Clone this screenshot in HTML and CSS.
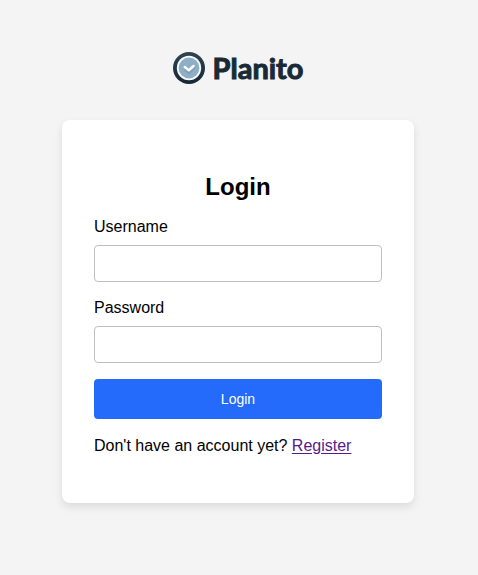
FILE: index.html
```html
<!DOCTYPE html>
<html lang="en">
<head>
  <meta charset="utf-8">
  <meta name="viewport" content="width=device-width, initial-scale=1">
  <title>Planito</title>
  <link rel="stylesheet" href="styles.css">
</head>
<body>
  <main class="page">
    <div class="brand">
      <svg class="brand-mark" viewBox="0 0 32 32" aria-hidden="true">
        <defs>
          <linearGradient id="ring" x1="0" y1="0" x2="0" y2="1">
            <stop offset="0" stop-color="#2f4553"/>
            <stop offset="1" stop-color="#152733"/>
          </linearGradient>
        </defs>
        <circle cx="16" cy="16" r="16" fill="url(#ring)"/>
        <circle cx="16" cy="16" r="12.2" fill="#f8fafb"/>
        <circle cx="16" cy="16" r="10.4" fill="#8fafc7"/>
        <path d="M12 17.5l4 3.5 5.5-5.5" fill="none" stroke="#7f9fb8" stroke-width="2.5" stroke-linecap="round" stroke-linejoin="round"/>
        <path d="M11.8 15l4 3.4 4.8-4.4" fill="none" stroke="#fff" stroke-width="2.5" stroke-linecap="round" stroke-linejoin="round"/>
      </svg>
      <span class="brand-name">Planito</span>
    </div>

    <section class="card">
      <h2 class="title">Login</h2>
      <form class="form">
        <div class="field">
          <label for="username">Username</label>
          <input id="username" name="username" type="text">
        </div>
        <div class="field">
          <label for="password">Password</label>
          <input id="password" name="password" type="password">
        </div>
        <button class="submit" type="submit">Login</button>
      </form>
      <p class="hint">Don't have an account yet? <a href="#register">Register</a></p>
    </section>
  </main>
</body>
</html>
```
FILE: styles.css
```css
* {
  box-sizing: border-box;
}

body {
  margin: 0;
  background: #f4f4f4;
  color: #000;
  font: 16px/20px "Liberation Sans", Arial, sans-serif;
}

.page {
  display: flex;
  flex-direction: column;
  align-items: center;
  gap: 36px;
  padding: 52px 64px 72px 62px;
}

.brand {
  display: flex;
  align-items: center;
  gap: 8px;
}

.brand-mark {
  width: 32px;
  height: 32px;
}

.brand-name {
  color: #182a36;
  font: 700 29px/32px Lato, sans-serif;
  -webkit-text-stroke: 1px #182a36;
}

.card {
  width: 100%;
  max-width: 352px;
  padding: 32px;
  border-radius: 8px;
  background: #fff;
  box-shadow: 0 4px 8px rgba(0, 0, 0, 0.1);
}

.title {
  margin: 20px 0 16px;
  font-size: 24px;
  line-height: 29px;
  text-align: center;
}

.form {
  display: flex;
  flex-direction: column;
  gap: 16px;
}

.field {
  display: flex;
  flex-direction: column;
  gap: 8px;
}

.field input {
  width: 100%;
  height: 37px;
  padding: 8px;
  border: 1px solid #bfbfbf;
  border-radius: 4px;
  background: #fff;
  font: inherit;
}

.submit {
  height: 40px;
  border: 0;
  border-radius: 4px;
  background: #246bfb;
  color: #fff;
  font: 14px/16px "Liberation Sans", Arial, sans-serif;
  cursor: pointer;
}

.hint {
  margin: 16px 0 14px;
  line-height: 22px;
}

.hint a {
  color: #551a8b;
  text-underline-offset: 2px;
}
```
